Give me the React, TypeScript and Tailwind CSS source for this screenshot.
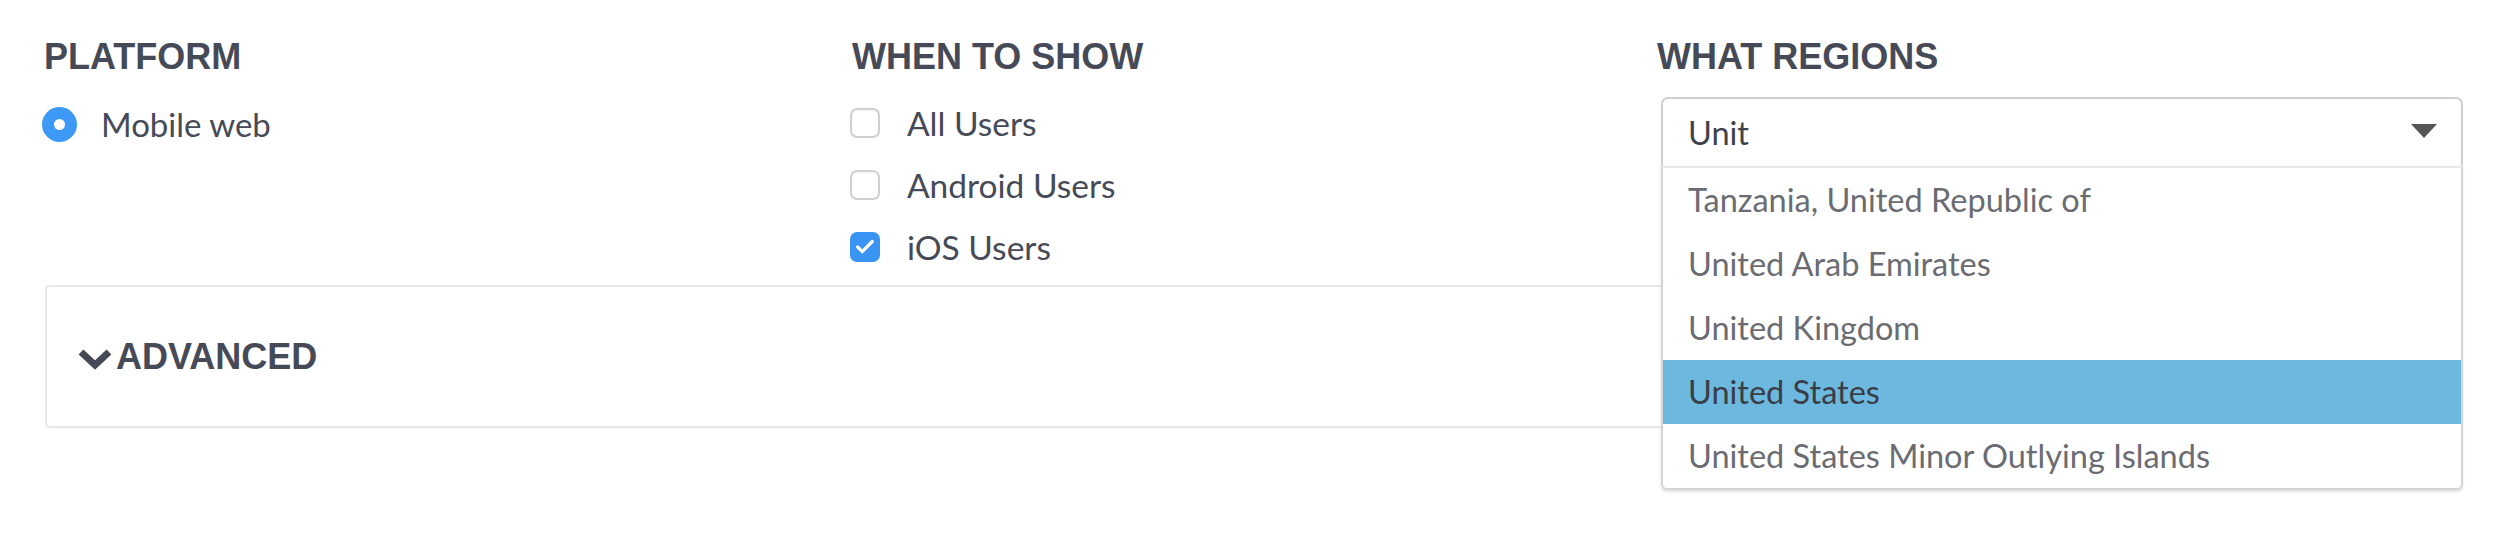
import { Check } from 'lucide-react';

const regions = [
  'Tanzania, United Republic of',
  'United Arab Emirates',
  'United Kingdom',
  'United States',
  'United States Minor Outlying Islands',
];

const audiences = [
  { label: 'All Users', checked: false },
  { label: 'Android Users', checked: false },
  { label: 'iOS Users', checked: true },
];

const heading =
  "h-[34px] text-[36px] leading-[34px] font-bold text-[#464a57] font-['Liberation_Sans',Arial,sans-serif]";

export default function App() {
  return (
    <div className="min-h-[544px] w-[2506px] bg-white font-['Lato',sans-serif] text-[#464a57]">
      <div className="pl-[45px] pt-[40px]">
        <div className="grid grid-cols-[805px_805px_807px]">
          {/* Platform */}
          <div>
            <h2 className={`${heading} -ml-[1px]`}>PLATFORM</h2>
            <div className="mt-[18px] flex h-[62px] items-center pt-[3px]">
              <span className="-ml-[3px] flex h-[35px] w-[35px] items-center justify-center rounded-full bg-[#3d99f5]">
                <span className="h-[11px] w-[11px] rounded-full bg-white" />
              </span>
              <span className="ml-[24px] text-[33px]">Mobile web</span>
            </div>
          </div>

          {/* When to show */}
          <div>
            <h2 className={`${heading} pl-[2px]`}>WHEN TO SHOW</h2>
            <div className="mt-[18px]">
              {audiences.map((a) => (
                <div key={a.label} className="flex h-[62px] items-center">
                  {a.checked ? (
                    <span className="flex h-[30px] w-[30px] items-center justify-center rounded-[7px] bg-[#3a94f4]">
                      <Check className="h-[22px] w-[22px] text-white" strokeWidth={3.5} />
                    </span>
                  ) : (
                    <span className="h-[30px] w-[30px] rounded-[7px] border-2 border-[#cfcfcf] bg-white shadow-[inset_0_1px_2px_rgba(0,0,0,0.06)]" />
                  )}
                  <span className="ml-[27px] text-[33.5px]">{a.label}</span>
                </div>
              ))}
            </div>
          </div>

          {/* What regions */}
          <div className="relative z-10">
            <h2 className={`${heading} pl-[2px]`}>WHAT REGIONS</h2>
            <div className="relative mt-[23px] ml-[6px] w-[802px]">
              <div className="flex h-[69px] items-center justify-between rounded-t-[7px] border-2 border-b-0 border-[#cdd0d4] pl-[25px] pr-[24px]">
                <span className="pt-[2px] text-[32.5px] text-[#3f424c]">Unit</span>
                <svg width="26" height="14" viewBox="0 0 26 14" className="mt-[-4px]">
                  <path d="M0 0 H26 L13 14 Z" fill="#555" />
                </svg>
              </div>
              <ul className="absolute left-0 top-[69px] w-full rounded-b-[6px] border-2 border-t-2 border-[#d3d5d8] border-t-[#e8e8e8] bg-white shadow-[0_2px_3px_rgba(0,0,0,0.12)]">
                {regions.map((r) => (
                  <li
                    key={r}
                    className={
                      r === 'United States'
                        ? 'flex h-[64px] items-center bg-[#6cb8de] pl-[25px] text-[32.5px] text-[#3a3d46]'
                        : 'flex h-[64px] items-center pl-[25px] text-[32.5px] text-[#6a6c72]'
                    }
                  >
                    {r}
                  </li>
                ))}
              </ul>
            </div>
          </div>
        </div>

        {/* Advanced */}
        <div className="mt-[7px] flex h-[143px] w-[2416px] items-center rounded-[5px] border-2 border-[#e8e8e8] shadow-[0_1px_2px_rgba(0,0,0,0.04)]">
          <svg width="36" height="22" viewBox="0 0 36 22" className="ml-[30px] mt-[4px]">
            <polyline
              points="4,4 18,17 32,4"
              fill="none"
              stroke="#464a57"
              strokeWidth="7"
              strokeLinejoin="miter"
            />
          </svg>
          <span className={`${heading} ml-[3px] leading-[34px]`}>ADVANCED</span>
        </div>
      </div>
    </div>
  );
}
